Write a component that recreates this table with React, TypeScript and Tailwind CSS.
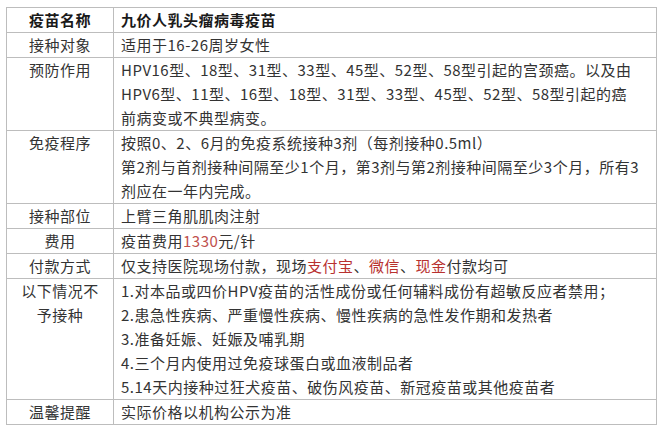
const rows: { label: React.ReactNode; lines: React.ReactNode[]; bold?: boolean }[] = [
  { label: "疫苗名称", lines: ["九价人乳头瘤病毒疫苗"], bold: true },
  { label: "接种对象", lines: ["适用于16-26周岁女性"] },
  {
    label: "预防作用",
    lines: [
      "HPV16型、18型、31型、33型、45型、52型、58型引起的宫颈癌。以及由",
      "HPV6型、11型、16型、18型、31型、33型、45型、52型、58型引起的癌",
      "前病变或不典型病变。",
    ],
  },
  {
    label: "免疫程序",
    lines: [
      "按照0、2、6月的免疫系统接种3剂（每剂接种0.5ml）",
      "第2剂与首剂接种间隔至少1个月，第3剂与第2剂接种间隔至少3个月，所有3",
      "剂应在一年内完成。",
    ],
  },
  { label: "接种部位", lines: ["上臂三角肌肌肉注射"] },
  {
    label: "费用",
    lines: [
      <>
        疫苗费用<span className="text-[#c0504d]">1330</span>元/针
      </>,
    ],
  },
  {
    label: "付款方式",
    lines: [
      <>
        仅支持医院现场付款，现场<span className="text-[#b8312f]">支付宝</span>、
        <span className="text-[#b8312f]">微信</span>、<span className="text-[#b8312f]">现金</span>付款均可
      </>,
    ],
  },
  {
    label: (
      <>
        以下情况不
        <br />
        予接种
      </>
    ),
    lines: [
      "1.对本品或四价HPV疫苗的活性成份或任何辅料成份有超敏反应者禁用；",
      "2.患急性疾病、严重慢性疾病、慢性疾病的急性发作期和发热者",
      "3.准备妊娠、妊娠及哺乳期",
      "4.三个月内使用过免疫球蛋白或血液制品者",
      "5.14天内接种过狂犬疫苗、破伤风疫苗、新冠疫苗或其他疫苗者",
    ],
  },
  { label: "温馨提醒", lines: ["实际价格以机构公示为准"] },
];

export default function App() {
  return (
    <div
      className="h-[432px] w-[664px] bg-white pl-[6px] pt-[7px]"
      style={{ fontFamily: '"Noto Sans CJK SC", "Noto Sans", sans-serif' }}
    >
      <table className="w-[651px] border-collapse text-[15px] leading-[24px] tracking-[0.5px] text-[#333]">
        <tbody>
          {rows.map((row, i) => (
            <tr key={i}>
              <td
                className={
                  row.bold
                    ? "w-[107px] border border-[#bdbdbd] p-0 text-center align-top font-bold text-[#1a1a1a]"
                    : "w-[107px] border border-[#bdbdbd] p-0 text-center align-top"
                }
              >
                {row.label}
              </td>
              <td
                className={
                  row.bold
                    ? "border border-[#bdbdbd] py-0 pl-[7px] pr-0 align-top font-bold text-[#1a1a1a]"
                    : "border border-[#bdbdbd] py-0 pl-[7px] pr-0 align-top"
                }
              >
                {row.lines.map((line, j) => (
                  <div key={j} className="whitespace-nowrap">
                    {line}
                  </div>
                ))}
              </td>
            </tr>
          ))}
        </tbody>
      </table>
    </div>
  );
}
